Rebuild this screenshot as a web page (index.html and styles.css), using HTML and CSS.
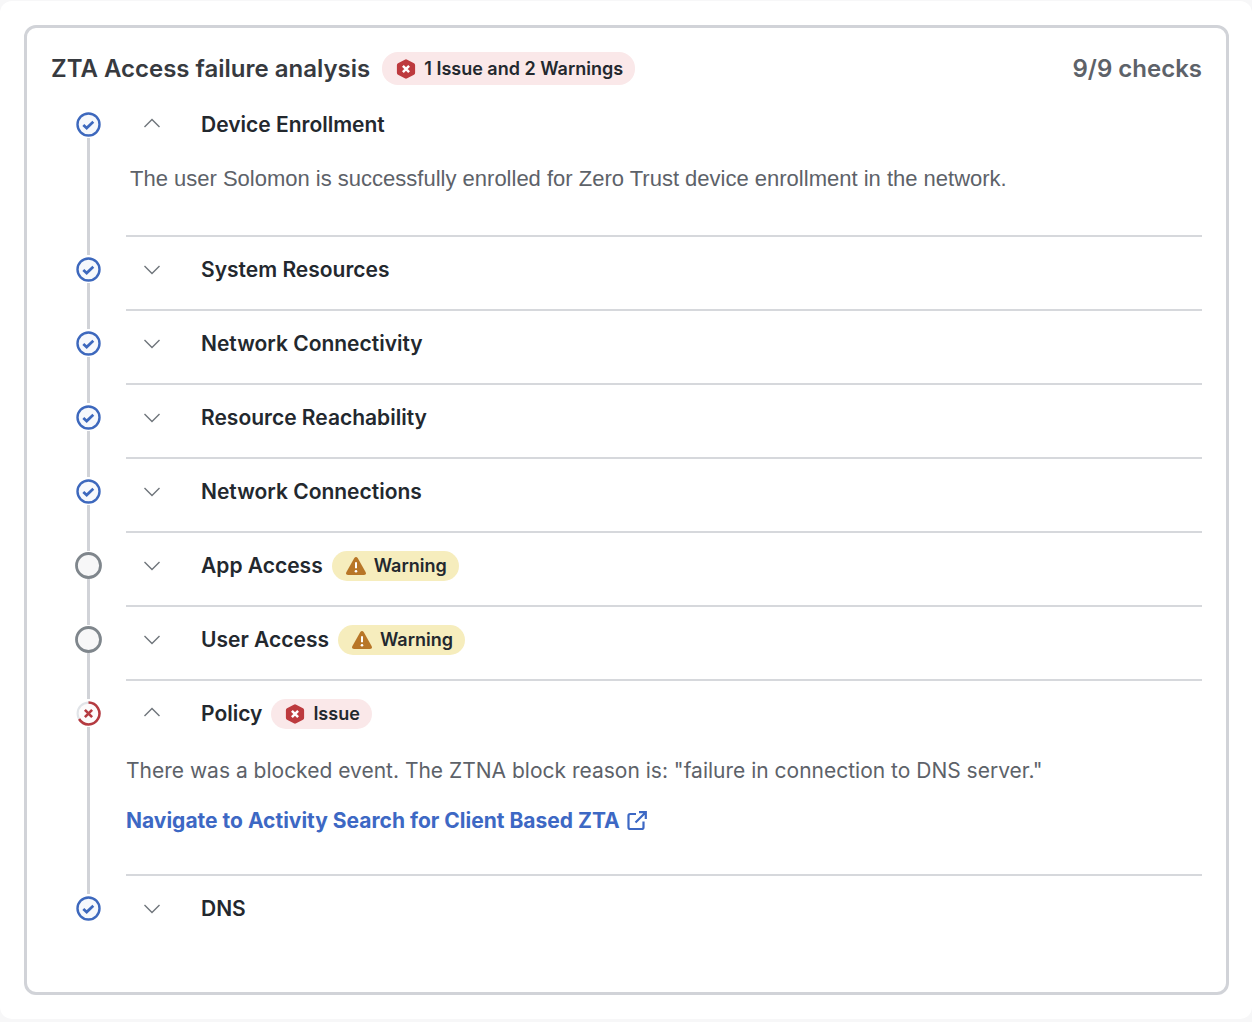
FILE: index.html
```html
<!DOCTYPE html>
<html lang="en">
<head>
<meta charset="utf-8">
<meta name="viewport" content="width=device-width, initial-scale=1">
<title>ZTA Access failure analysis</title>
<link rel="stylesheet" href="styles.css">
</head>
<body>
<svg class="sprite" aria-hidden="true">
  <symbol id="ok" viewBox="0 0 27 27"><circle cx="13.5" cy="13.5" r="11" fill="#f6f8fc" stroke="#3d68bd" stroke-width="2.4"/><path d="M8.3 13.900l3.400 3.200 6.600-6.300" fill="none" stroke="#3d68bd" stroke-width="2.7"/></symbol>
  <symbol id="idle" viewBox="0 0 27 27"><circle cx="13.5" cy="13.5" r="12" fill="#f7f7f8" stroke="#7f868c" stroke-width="2.8"/></symbol>
  <symbol id="fail" viewBox="0 0 27 27"><circle cx="13.5" cy="13.5" r="10.900" fill="#fdfbfb" stroke="#e1e4e8" stroke-width="2.1"/><path d="M13.500 2.600A10.900 10.900 0 1 1 4.100 19" fill="none" stroke="#b53a40" stroke-width="2.500"/><path d="M9.900 9.900l7.200 7.200M17.100 9.900l-7.200 7.200" stroke="#b53a40" stroke-width="2.600"/></symbol>
  <symbol id="down" viewBox="0 0 16 14"><path d="M.5 3l7.500 7.500L15.500 3" fill="none" stroke="#6f757b" stroke-width="1.4"/></symbol>
  <symbol id="up" viewBox="0 0 16 14"><path d="M.5 9L8 1.400 15.500 9" fill="none" stroke="#6f757b" stroke-width="1.4"/></symbol>
  <symbol id="issue" viewBox="0 0 20 20"><path d="M8.800.7a2.400 2.400 0 0 1 2.400 0l6.800 3.600q1.100.7 1.100 2v7.400q0 1.300-1.100 2l-6.800 3.600a2.400 2.400 0 0 1-2.400 0L2 15.700q-1.100-.7-1.100-2V6.300q0-1.300 1.100-2z" fill="#bd3a3e"/><path d="M6.900 6.900l6.200 6.200M13.100 6.900l-6.200 6.200" stroke="#fff" stroke-width="2.500"/></symbol>
  <symbol id="warn" viewBox="0 0 20 20"><path d="M8.300 2q1.700-2 3.400 0l8 14.300q1 2.600-1.700 2.700H2Q-.7 18.900.3 16.300z" fill="#b87627"/><path d="M10 6.300v6" stroke="#fff" stroke-width="2"/><circle cx="10" cy="15.200" r="1.300" fill="#fff"/></symbol>
  <symbol id="external" viewBox="0 0 20 20"><path d="M9 3H3.200q-1.700 0-1.700 1.700v11.600q0 1.700 1.700 1.700h11.600q1.700 0 1.700-1.700V10.500M12 1.200h6.800V8M18.500 1.500L8.500 11.500" fill="none" stroke="#3d68c4" stroke-width="2.200"/></symbol>
</svg>
<main class="sheet">
  <section class="card">
    <header class="card-header">
      <h1 class="card-title">ZTA Access failure analysis</h1>
      <span class="badge badge-issue badge-large"><svg class="badge-icon"><use href="#issue"/></svg>1 Issue and 2 Warnings</span>
      <span class="count">9/9 checks</span>
    </header>
    <ol class="checks">
      <li class="check">
        <div class="rail"><svg class="status"><use href="#ok"/></svg></div>
        <div class="body">
          <button class="toggle" type="button" aria-expanded="true"><svg class="chevron"><use href="#up"/></svg><span class="name">Device Enrollment</span></button>
          <div class="panel panel-inset"><p class="text text-plain">The user Solomon is successfully enrolled for Zero Trust device enrollment in the network.</p></div>
        </div>
      </li>
      <li class="check">
        <div class="rail"><svg class="status"><use href="#ok"/></svg></div>
        <div class="body"><button class="toggle" type="button" aria-expanded="false"><svg class="chevron"><use href="#down"/></svg><span class="name">System Resources</span></button></div>
      </li>
      <li class="check">
        <div class="rail"><svg class="status"><use href="#ok"/></svg></div>
        <div class="body"><button class="toggle" type="button" aria-expanded="false"><svg class="chevron"><use href="#down"/></svg><span class="name">Network Connectivity</span></button></div>
      </li>
      <li class="check">
        <div class="rail"><svg class="status"><use href="#ok"/></svg></div>
        <div class="body"><button class="toggle" type="button" aria-expanded="false"><svg class="chevron"><use href="#down"/></svg><span class="name">Resource Reachability</span></button></div>
      </li>
      <li class="check">
        <div class="rail"><svg class="status"><use href="#ok"/></svg></div>
        <div class="body"><button class="toggle" type="button" aria-expanded="false"><svg class="chevron"><use href="#down"/></svg><span class="name">Network Connections</span></button></div>
      </li>
      <li class="check">
        <div class="rail"><svg class="status"><use href="#idle"/></svg></div>
        <div class="body"><button class="toggle" type="button" aria-expanded="false"><svg class="chevron"><use href="#down"/></svg><span class="name">App Access</span><span class="badge badge-warning"><svg class="badge-icon"><use href="#warn"/></svg>Warning</span></button></div>
      </li>
      <li class="check">
        <div class="rail"><svg class="status"><use href="#idle"/></svg></div>
        <div class="body"><button class="toggle" type="button" aria-expanded="false"><svg class="chevron"><use href="#down"/></svg><span class="name">User Access</span><span class="badge badge-warning"><svg class="badge-icon"><use href="#warn"/></svg>Warning</span></button></div>
      </li>
      <li class="check">
        <div class="rail"><svg class="status"><use href="#fail"/></svg></div>
        <div class="body">
          <button class="toggle" type="button" aria-expanded="true"><svg class="chevron"><use href="#up"/></svg><span class="name">Policy</span><span class="badge badge-issue"><svg class="badge-icon"><use href="#issue"/></svg>Issue</span></button>
          <div class="panel">
            <p class="text">There was a blocked event. The ZTNA block reason is: "failure in connection to DNS server."</p>
            <a class="link" href="#activity">Navigate to Activity Search for Client Based ZTA<svg class="link-icon"><use href="#external"/></svg></a>
          </div>
        </div>
      </li>
      <li class="check">
        <div class="rail"><svg class="status"><use href="#ok"/></svg></div>
        <div class="body"><button class="toggle" type="button" aria-expanded="false"><svg class="chevron"><use href="#down"/></svg><span class="name">DNS</span></button></div>
      </li>
    </ol>
  </section>
</main>
</body>
</html>
```
FILE: styles.css
```css
* { box-sizing: border-box; }

body {
  margin: 0;
  padding: 1px 0 3px;
  background: #f7f7f8;
  color: #23282e;
  font-family: Inter, "Liberation Sans", sans-serif;
}

svg { display: block; flex: none; }

.sprite { position: absolute; width: 0; height: 0; }

.sheet {
  padding: 24px 23px 24px 24px;
  border-radius: 12px;
  background: #fff;
}

.card {
  padding: 20px 24px 44px;
  border: 3px solid #d1d3d8;
  border-radius: 12px;
}

.card-header {
  display: flex;
  align-items: center;
  gap: 12px;
  height: 41px;
  margin-bottom: 3px;
}

.card-title {
  margin: 0;
  color: #373a3f;
  font-size: 24px;
  font-weight: 600;
  line-height: 32px;
}

.count {
  margin-left: auto;
  color: #5d6269;
  font-size: 24px;
  font-weight: 600;
  line-height: 32px;
}

.badge {
  display: inline-flex;
  align-items: center;
  gap: 8px;
  height: 30px;
  padding: 0 12px 0 14px;
  border-radius: 16px;
  font-size: 18px;
  font-weight: 600;
  line-height: 24px;
}

.badge-large { height: 33px; }
.badge-issue { background: #fae8e9; }
.badge-warning { background: #f6edbd; }
.badge-icon { width: 20px; height: 20px; }

.checks {
  margin: 0;
  padding: 0;
  list-style: none;
}

.check { display: flex; }

.rail {
  display: flex;
  flex: none;
  flex-direction: column;
  align-items: center;
  width: 75px;
}

.rail::before,
.rail::after {
  width: 3px;
  background: #d1d3d8;
  content: "";
}

.rail::before { height: 18px; margin-bottom: 1px; }
.rail::after { flex: 1; }

.check:first-child .rail::before,
.check:last-child .rail::after { background: none; }

.status { width: 27px; height: 27px; }

.body {
  flex: 1;
  min-width: 0;
  padding-bottom: 7px;
  border-bottom: 2px solid #d6d8dc;
}

.check:last-child .body { border-bottom: 0; }

.toggle {
  display: flex;
  align-items: center;
  gap: 9px;
  width: 100%;
  height: 65px;
  padding: 0 18px;
  border: 0;
  background: none;
  color: inherit;
  font: inherit;
  text-align: left;
  cursor: pointer;
}

.chevron { width: 16px; height: 14px; }

.name {
  font-size: 21px;
  font-weight: 600;
  line-height: 28px;
}

.chevron + .name { margin-left: 32px; }

.panel {
  display: flex;
  flex-direction: column;
  align-items: flex-start;
  gap: 22px;
  padding: 11px 0 32px;
}

.panel-inset { padding: 8px 0 35px 4px; }

.text {
  margin: 0;
  color: #5d6269;
  font-size: 21px;
  line-height: 28px;
}

.text-plain { font-family: "Liberation Sans", Arial, sans-serif; font-size: 22px; }

.link {
  display: inline-flex;
  align-items: center;
  gap: 7px;
  color: #3d68c4;
  font-size: 21px;
  font-weight: 700;
  line-height: 28px;
  text-decoration: none;
}

.link-icon { width: 20px; height: 20px; }
```
